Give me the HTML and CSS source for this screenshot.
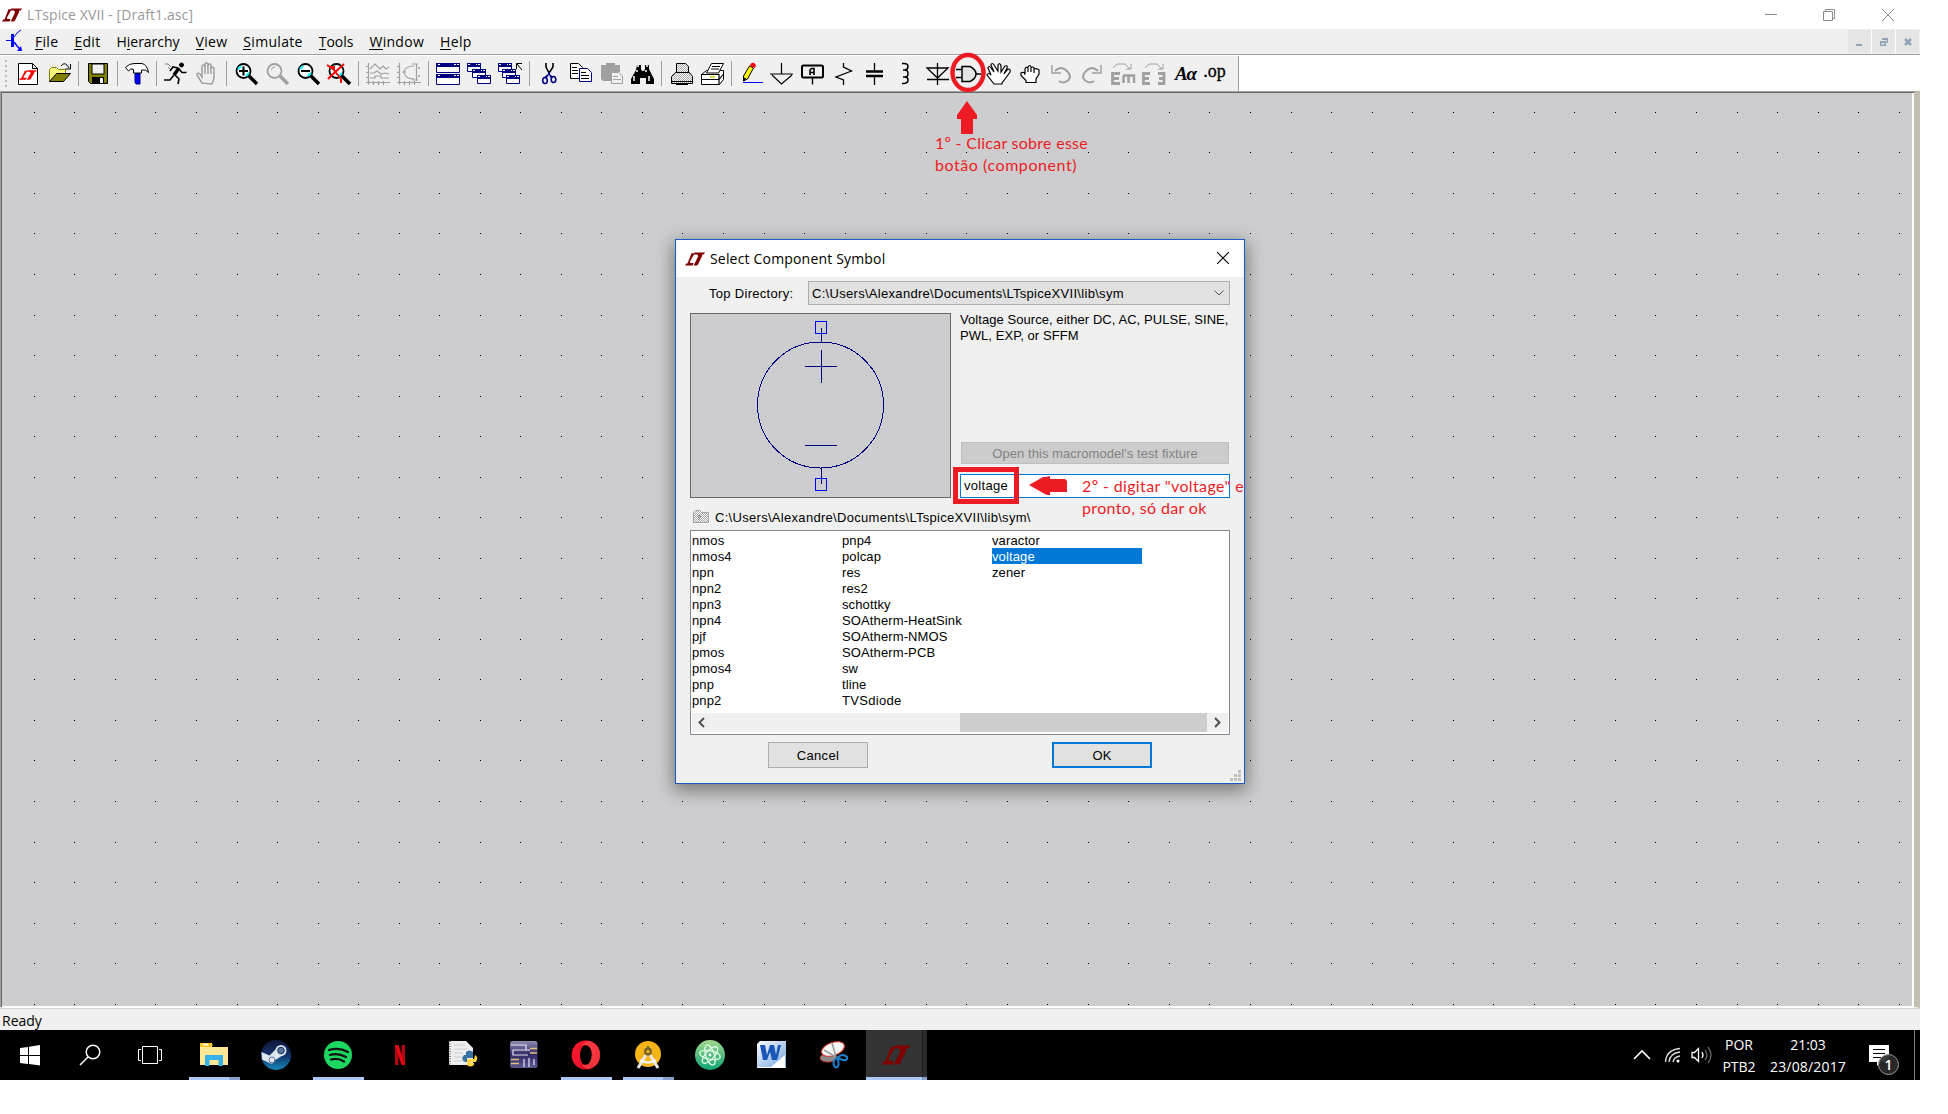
FILE: index.html
```html
<!DOCTYPE html>
<html lang="pt">
<head>
<meta charset="utf-8">
<title>LTspice XVII - [Draft1.asc]</title>
<link rel="stylesheet" href="styles.css">
</head>
<body>
<svg class="defs" aria-hidden="true">
  <symbol id="lt" viewBox="0 0 20 14"><path d="M6.5 1.2h3.2L5 9.4q-.6 1.4.8 1.6h2.8l-1 2.6H0l1.3-2h1.2z"/><path d="M9.3.4H20l-1.3 2.1h-1.9q.7.5.2 1.8l-4 8.3q-.5 1-1.6 1H8.6l4-8.2q1-2-.6-2.9h-3z"/></symbol>
  <symbol id="mag" viewBox="0 0 31 24"><circle cx="12.500" cy="9" r="7" fill="#f7ffff" stroke="#000" stroke-width="1.800"/><path d="M7 7l3-3M18 11l-3 3" stroke="#0ff" stroke-width="2"/><path d="M18 14l8 8" stroke="#000" stroke-width="3.500"/></symbol>
  <symbol id="win" viewBox="0 0 15 10"><path d="M.5.500h13v8H.5z" fill="#fff" stroke="#000080"/><path d="M0 0h14v4H0z" fill="#000080"/><path d="M1 1.500h2M9 1.500h1M11 1.500h2" stroke="#fff"/></symbol>
  <pattern id="hatch" width="2" height="2" patternUnits="userSpaceOnUse"><rect width="2" height="2" fill="#fff"/><path d="M0 0h1v1h-1zM1 1h1v1h-1z" fill="#a8a8a8"/></pattern>
  <pattern id="yhatch" width="2" height="2" patternUnits="userSpaceOnUse"><rect width="2" height="2" fill="#ff0"/><path d="M0 0h1v1h-1zM1 1h1v1h-1z" fill="#fff"/></pattern>
  <linearGradient id="steam" x2="0" y2="1"><stop offset="0" stop-color="#10193b"/><stop offset=".5" stop-color="#113066"/><stop offset="1" stop-color="#1689bd"/></linearGradient>
  <linearGradient id="atom" x2="0" y2="1"><stop offset="0" stop-color="#a3d78c"/><stop offset="1" stop-color="#0da574"/></linearGradient>
  <linearGradient id="opera" x2="1" y2="1"><stop offset="0" stop-color="#ff1b2d"/><stop offset=".5" stop-color="#f0142c"/><stop offset="1" stop-color="#b5000f"/></linearGradient>
  <linearGradient id="chip" x2="0" y2="1"><stop offset="0" stop-color="#8f8cb4"/><stop offset=".5" stop-color="#2f2b66"/><stop offset="1" stop-color="#5e5a92"/></linearGradient>
  <linearGradient id="word" x2="1" y2="1"><stop offset="0" stop-color="#fff"/><stop offset="1" stop-color="#6fa3de"/></linearGradient>
</svg>

<div class="screen">
  <header class="titlebar">
    <svg class="logo" width="20" height="14"><use href="#lt"/></svg>
    <span class="title ui">LTspice XVII - [Draft1.asc]</span>
    <svg class="winbtns" width="130" height="14" fill="none" stroke="#8c8c8c">
      <path d="M0 6.500h12M58.500 3.500h9v9h-9zM60.500 3.500v-2h9v9h-2M117 1l12 12M129 1l-12 12"/>
    </svg>
  </header>

  <nav class="menubar">
    <svg class="bjt" width="18" height="24" fill="none" stroke="#00f"><path d="M0 11.500h6"/><path d="M6.500 5v13" stroke-width="3"/><path d="M8 8l3-4 4-3" stroke-width="1"/><path d="M8 13l3 4 4 4" stroke-width="1.500"/><path d="M16 22h-5l4-5z" fill="#00f" stroke="none"/></svg>
    <span class="ui"><u>F</u>ile</span><span class="ui"><u>E</u>dit</span><span class="ui tight">H<u>i</u>erarchy</span><span class="ui"><u>V</u>iew</span><span class="ui"><u>S</u>imulate</span><span class="ui tight"><u>T</u>ools</span><span class="ui"><u>W</u>indow</span><span class="ui"><u>H</u>elp</span>
    <div class="mdi">
      <i><svg width="23" height="23"><path d="M8 14h6v2H8z"/></svg></i>
      <i><svg width="23" height="23"><path d="M8 11h6v5H8zM9.500 13v1.500h3V13zM10 8h6v5h-1.500V10H10z" fill-rule="evenodd"/></svg></i>
      <i><svg width="23" height="23"><path d="M9 9l6 6M15 9l-6 6" stroke="#91a3b4" stroke-width="2.500"/></svg></i>
    </div>
  </nav>

  <div class="toolrow">
  <div class="toolbar">
    <i class="grip"></i>
    <svg><path d="M5.500 1.500h14l5 5v16h-19z" fill="#fff" stroke="#000"/><path d="M19.500 1.500v5h5" fill="none" stroke="#000"/><svg x="6" y="8" width="18" height="10" viewBox="0 0 20 14" preserveAspectRatio="none" fill="red"><use href="#lt" width="20" height="14"/></svg></svg>
    <svg><path d="M5.500 19V7.500l2-2h5l2 2h7v4" fill="url(#yhatch)" stroke="#808000"/><path d="M5.500 19.500l7-8h14l-7 8z" fill="#808000" stroke="#000"/><path d="M17 4q3-4 6-1l2 3M26.500 2v5h-5" fill="none" stroke="#000"/></svg>
    <i class="sep"></i>
    <svg><path d="M5.500 1.500h19v20h-17l-2-2z" fill="#808000" stroke="#000"/><path d="M9 2h12v10H9z" fill="#f0f0f0" stroke="#000"/><path d="M9 15h12v6.500H9z"/><path d="M17 16h3v5h-3z" fill="#f0f0f0"/></svg>
    <i class="sep"></i>
    <svg><path d="M13 11h5v11h-4l-1-2z" fill="#00f" stroke="#000080"/><path d="M3.500 5.500Q7 1.500 12 1.500h8q5 1 6.500 9-3-3.500-6-2.500h-1v3h-8V7.500q-3-2-5 1.500z" fill="#fff" stroke="#000"/></svg>
    <i class="sep"></i>
    <svg fill="none" stroke="#000"><circle cx="20.500" cy="3" r="2" fill="#000"/><path d="M18 6l-5 7" stroke-width="3.500"/><path d="M18 7l3 3.500h4.500M17 6l-5-1-3 4M14 13l4 4-1 5M13 13l-4 5H3" stroke-width="1.600"/><path d="M4 2h3l3 3M7 5l2 2" stroke="#808080"/></svg>
    <svg fill="#f0f0f0" stroke="#a0a0a0" stroke-width="1.500"><path d="M10 21l-5-8q0-3 3-1l2 3V4q1.500-2 3 0V2q1.500-2 3 0v1q1.500-2 3 0v3q2-1.500 3 0v10l-2 6z"/><path d="M13 4v8M16 3v9M19 5v7" fill="none"/></svg>
    <i class="sep"></i>
    <svg><use href="#mag"/><path d="M8 9h9M12.500 4.500v9" stroke="#000" stroke-width="2"/></svg>
    <svg><g fill="none" stroke="#a0a0a0"><circle cx="12.500" cy="9" r="7" stroke-width="1.800"/><path d="M9 8q1-3 4-3"/><path d="M18 14l8 8" stroke-width="3.500"/></g></svg>
    <svg><use href="#mag"/><path d="M8 9h9" stroke="#000" stroke-width="2"/></svg>
    <svg><use href="#mag"/><path d="M3 3l6 4 8 10M20 2L8 13l-4 4M6 5h4v3M17 17v4" fill="none" stroke="red" stroke-width="2"/></svg>
    <i class="sep"></i>
    <svg fill="none" stroke="#a0a0a0" stroke-width="1.200"><path d="M5.500 1v21.500M3 20.500h24M3 4.500h3M3 10.500h3M3 15.500h3M10.500 19v4M15.500 19v4M20.500 19v4M7 7l5-5 5 5 3-3 3 3 3-2M7 11h4l3-2 4 3 4-1 4 1M7 16h5v-2h6v2h8"/></svg>
    <svg fill="none" stroke="#a0a0a0" stroke-width="1.200"><path d="M5.500 1v21.500M3 20.500h24M3 4.500h3M3 10.500h3M3 15.500h3M10.500 19v4M15.500 19v4M20.500 19v4M22.500 2v17M18 2h6M18 18h6M20 4q-9 0-10 6 1 7 10 7"/><path d="M8 10h4M24 5l2 2M24 15l2-2"/></svg>
    <i class="sep"></i>
    <svg><g fill="#fff" stroke="#000080"><path d="M3.500 1.500h23v9h-23zM3.500 12.500h23v10h-23z"/></g><path d="M3 1h24v4H3zM3 12h24v4H3z" fill="#000080"/><path d="M5 2.500h2M21 2.500h2M24 2.500h2M5 13.500h2M21 13.500h2M24 13.500h2" stroke="#fff"/></svg>
    <svg><use href="#win" x="3" y="1" width="15" height="10"/><use href="#win" x="8" y="7" width="15" height="10"/><use href="#win" x="13" y="13" width="15" height="10"/></svg>
    <svg><use href="#win" x="3" y="1" width="15" height="10"/><use href="#win" x="7" y="7" width="15" height="10"/><use href="#win" x="11" y="13" width="15" height="10"/><path d="M27 8l-5-6M21.500 7V1.500H27" fill="none" stroke="#000"/></svg>
    <i class="sep"></i>
    <svg fill="none"><path d="M12 1v4l3 6M19 1v4l-4 6" stroke="#000" stroke-width="1.600"/><path d="M15 10v3M14 13l-3 3M16 13l2 3" stroke="#000080" stroke-width="2"/><ellipse cx="11" cy="18.500" rx="2.300" ry="3" stroke="#000080" stroke-width="1.600"/><ellipse cx="19.500" cy="17.500" rx="2.300" ry="3" stroke="#000080" stroke-width="1.600"/></svg>
    <svg fill="#fff"><path d="M5.500 1.500h8l4 4v11h-12z" stroke="#000"/><path d="M7 5.500h5M7 8.500h6M7 11.500h6" stroke="#000"/><path d="M14.500 6.500h8l4 4v9h-12z" stroke="#000080"/><path d="M16 10.500h5M16 13.500h8M16 16.500h8" stroke="#000"/></svg>
    <svg><path d="M5 3h5V1h9v2h5v7h-9v9H7l-2-2z" fill="#a0a0a0"/><path d="M15.500 10.500h7l4 3v8h-11z" fill="#f0f0f0" stroke="#a0a0a0"/><path d="M17 14.500h5M17 17.500h8M10 5h9" stroke="#a0a0a0"/></svg>
    <svg><path d="M10 3h4v4l1 2h2l1-2V3h4v4l5 10v5h-8v-6h-6v6H4v-5L9 8z"/><path d="M10 4h2M19 4h2M10 8v2M19 8v2M7 14v5M22 14v5" stroke="#fff" stroke-width="1.500"/></svg>
    <i class="sep"></i>
    <svg fill="url(#hatch)" stroke="#000"><path d="M10.500 10.500v-9h9l3 3v6z"/><path d="M9.500 10.500h14l3 4v7h-21v-7z"/><path d="M6 19.500h20M10 22.500h12" fill="none"/></svg>
    <svg fill="#fff" stroke="#000"><path d="M4.500 12.500l5-4h17v9l-4 5h-18z"/><path d="M9.500 11l5-9.500h12l-5 9.500z"/><path d="M15 4.500h8M14 7h8M4 12.500h18v10M4 17.500h18l4-5" fill="none" stroke-width="1.200"/><path d="M13 15h5" stroke="#cc0" stroke-width="1.500"/></svg>
    <i class="sep"></i>
    <svg><path d="M7.500 14l6-10 4 2-6 11-4 2z" fill="#ff0" stroke="#000"/><path d="M14 4q1-4 4-3t1 5z" fill="red"/><path d="M7 15v4l4-2z"/><path d="M7 20.500h20" stroke="#00f"/></svg>
    <svg fill="none" stroke="#000" stroke-width="1.200"><path d="M14.500 1v11M3 12h23M5 13l9.500 9L25 13"/></svg>
    <svg fill="#f0f0f0" stroke="#000"><rect x="4" y="3.500" width="21" height="12" rx="1.500" stroke-width="2"/><path d="M14.500 16v6.500" stroke-width="1.400"/><path d="M12 13V8l1.500-1.500h2.500V13M12 10.500h4" stroke-width="1.600"/></svg>
    <svg fill="none" stroke="#000" stroke-width="1.300"><path d="M14.500 1v4l8 4L7 15l7.500 3v5"/></svg>
    <svg fill="none" stroke="#000"><path d="M14.500 1v8M14.500 15v8" stroke-width="1.300"/><path d="M6 9.500h17M6 14h17" stroke-width="2.300"/></svg>
    <svg fill="none" stroke="#000" stroke-width="1.500"><path d="M11 1.500h2q4 0 4 3t-3 3.500h-2 2q3 0 3 3.500T14 15h-2 2q3 0 3 3t-4 3.500h-2"/></svg>
    <svg fill="none" stroke="#000" stroke-width="1.300"><path d="M15.500 1v22M5 6h21L15.500 16zM5 17.500h22"/></svg>
    <svg fill="#e4e4e4" stroke="#000" stroke-width="1.500"><path d="M9 4.500h8q6 3 6 7.500t-6 7.500H9zM3 7.500h6M3 15.500h6M23 12h5"/></svg>
    <svg fill="#fff" stroke="#000" stroke-width="1.200"><path d="M10 22l-7-9q1-3 4 0L4 6q1-3 3 0l3 4-3-7q1-3 3 0l4 6V3q2-3 3 1v6l4-6q3-1 2 2l-3 6 4-5q3 0 2 3l-5 7-3 4v1z"/></svg>
    <svg fill="#fff" stroke="#000" stroke-width="1.200"><path d="M11 20.500v-2l-5-5q-1-4 3-3l1 2V7q1-3 3-1V5q2-3 3 0v1q2-2 3 0v1q3-1 5 1v4l-3 5v3.500zM13 6v4M16 6v4M19 7v4"/></svg>
    <svg fill="none" stroke="#a0a0a0" stroke-width="2"><path d="M9 9q6-6 12 0t0 10q-4 3-8 0"/><path d="M6 3v8h9" stroke-width="1.500"/></svg>
    <svg fill="none" stroke="#a0a0a0" stroke-width="2"><path d="M21 9q-6-6-12 0t0 10q4 3 8 0"/><path d="M24 3v8h-9" stroke-width="1.500"/></svg>
    <svg fill="none" stroke="#a0a0a0"><path d="M12 11.500H4.500v10H12M4.500 16.500H11" stroke-width="2.800"/><path d="M15 13.500h11V21M20.500 14v7M15.500 14v7" stroke-width="2.500"/><path d="M5 6l4-4h8l5 5M23 2v5h-5"/></svg>
    <svg fill="none" stroke="#a0a0a0"><path d="M11 11.500H4.500v10H11M4.500 16.500H10M19 11.500h6v10h-6M20 16.500h5" stroke-width="2.800"/><path d="M6 6l4-4h8l5 5M24 2v5h-5"/></svg>
    <span class="tool aa">Aα</span>
    <span class="tool op">.op</span>
  </div>
  </div>

  <main class="sheet"><svg width="1910" height="914"><path id="dots" stroke="#000" shape-rendering="crispEdges"/></svg></main>

  <footer class="status"><span class="ui tight">Ready</span></footer>

  <div class="taskbar">
    <div class="sys"><svg viewBox="0 0 60 50" fill="#fff"><path d="M20 18l8-1v8h-8zM29 16.800l11-1.800v10H29zM20 26h8v8l-8-1zM29 26h11v9.500l-11-1.500z"/></svg></div>
    <div class="sys"><svg viewBox="0 0 60 50" fill="none" stroke="#fff" stroke-width="1.500"><circle cx="33" cy="22" r="6.800"/><path d="M28 27l-8 8"/></svg></div>
    <div class="sys last"><svg viewBox="0 0 60 50" fill="none" stroke="#fff"><path d="M22.500 16.500h15v17h-15zM21 19.500h-2.500v11H21M39 19.500h2.500v11H39"/></svg></div>
    <div class="app run multi"><svg viewBox="0 0 62 50"><path d="M17 13h12v4h16v18H17z" fill="#f5cf4b"/><path d="M17 17h28v18H17z" fill="#ffe793"/><path d="M17 13h11l2 2-2 2H17z" fill="#fbc52c"/><path d="M20 14.500h5" stroke="#fff" stroke-width="1.500"/><path d="M22 36V25h18v11h-4.500v-6h-9v6z" fill="#35b0e8"/></svg></div>
    <div class="app"><svg viewBox="0 0 62 50"><circle cx="31" cy="25" r="15" fill="url(#steam)"/><path d="M16.500 22l8 3.500 7-7 6 7-8 5q-2 5-6 2l-6.500-3z" fill="#dfe5ee"/><circle cx="36" cy="20.500" r="5.500" fill="#dfe5ee"/><circle cx="36" cy="20.500" r="3.300" fill="#5c7398" stroke="#18315e"/><circle cx="27" cy="30" r="3" fill="none" stroke="#5c7398"/></svg></div>
    <div class="app run"><svg viewBox="0 0 62 50"><circle cx="31" cy="25" r="14" fill="#1ed760"/><path d="M22 20q10-3 19 2M23 25q8-2.500 16 2M24 29.500q7-2 13 2" fill="none" stroke="#111" stroke-width="2.300" stroke-linecap="round"/></svg></div>
    <div class="app"><svg viewBox="0 0 62 50"><path d="M26 15h3.500v20H26zM32.500 15H36v20h-3.500z" fill="#b20710"/><path d="M26 15h3.500L36 35h-3.500z" fill="#e50914"/></svg></div>
    <div class="app"><svg viewBox="0 0 62 50"><path d="M18 11h17l7 7v17H18z" fill="#eceef0"/><path d="M19 11v24" stroke="#888" stroke-dasharray="1 1.500" stroke-width="2"/><path d="M23 15h11M23 19h13M23 23h9M23 27h8M23 31h10" stroke="#ccc"/><path d="M35 26v-4q3-3 7 0v6h-6v4h-2q-5-3-1-7h5z" fill="#3772a4"/><path d="M44 25q4 2 1 7h-5v1h3v2q-4 3-7 0v-6h7z" fill="#ffd343"/></svg></div>
    <div class="app"><svg viewBox="0 0 62 50"><rect x="17" y="11" width="27.500" height="27" rx="2.500" fill="url(#chip)"/><path d="M18 15h15v5h4M35 25H20v-5h14M31 37v-8M36 37v-9M41 35v-6" fill="none" stroke="#e8e6f4" stroke-width="1.200"/><path d="M37 18.500h7M37 23h7M18 29.500h8M18 33.500h8" stroke="#e8bd7a" stroke-width="1.300"/></svg></div>
    <div class="app run"><svg viewBox="0 0 62 50"><path d="M31 10.500c19 0 19 29 0 29s-19-29 0-29zm0 4.500c-8 0-8 20 0 20s8-20 0-20z" fill="url(#opera)" fill-rule="evenodd"/><path d="M34 11q11 3 11 14T34 39q-4 0-7-4 9 1 9.500-10T27 15q3-4 7-4z" fill="#ff4b4b" opacity=".65"/></svg></div>
    <div class="app run multi"><svg viewBox="0 0 62 50"><circle cx="31" cy="24" r="13" fill="#f6b416"/><path d="M29 25l-8 13M33 25l8 13" stroke="#e9e9e9" stroke-width="3"/><path d="M23 30q8 5 16 0" fill="none" stroke="#f4f4f4" stroke-width="2.500"/><circle cx="31" cy="21.500" r="2.800" fill="#f6b416" stroke="#6e6130" stroke-width="2.200"/><path d="M31 16v3" stroke="#6e6130" stroke-width="2"/></svg></div>
    <div class="app"><svg viewBox="0 0 62 50"><circle cx="31" cy="25" r="15" fill="url(#atom)"/><g fill="none" stroke="#e9fff0" stroke-width="1.200"><ellipse cx="31" cy="25" rx="10.500" ry="4.300" transform="rotate(12 31 25)"/><ellipse cx="31" cy="25" rx="10.500" ry="4.300" transform="rotate(72 31 25)"/><ellipse cx="31" cy="25" rx="10.500" ry="4.300" transform="rotate(132 31 25)"/></g><circle cx="31" cy="25" r="1.400" fill="#fff"/></svg></div>
    <div class="app"><svg viewBox="0 0 62 50"><path d="M16 14l3-3h26v27H16z" fill="url(#word)"/><path d="M30 37l14-12v12z" fill="#fff"/><path d="M19 15h5l2 10 3-10h4l2 10 2-10h3l-4 15h-5l-2-8-3 8h-4z" fill="#1a56b5"/><path d="M16.500 37.500h28" stroke="#fff"/></svg></div>
    <div class="app"><svg viewBox="0 0 62 50"><ellipse cx="25" cy="28" rx="8" ry="4" fill="#8a8a8a" stroke="#c33"/><ellipse cx="30" cy="19" rx="12" ry="6.500" transform="rotate(-20 30 19)" fill="#f6f6f6" stroke="#d8342a"/><path d="M29 13l4 14M21 20l12 7" stroke="#9a9a9a" stroke-width="1.500"/><path d="M34 28q-6 4-2 9 5 2 3-8zM35 27q5-4 9 0 1 6-9 1z" fill="none" stroke="#1a82cf" stroke-width="2"/></svg></div>
    <div class="app active"><svg class="tlogo" width="30" height="20" fill="#800000"><use href="#lt"/></svg></div>
    <div class="tray">
      <svg class="chev" width="18" height="50" fill="none" stroke="#fff" stroke-width="1.600"><path d="M1 29l8-8 8 8"/></svg>
      <svg class="wifi" width="18" height="50" fill="none" stroke="#ddd" stroke-width="1.300"><path d="M1.500 32Q2 20 16 18.500M5 32q1-9 11-10M9 32q1-5 7-6"/><circle cx="14" cy="31" r="1.500" fill="#fff" stroke="none"/></svg>
      <svg class="vol" width="22" height="50" fill="none" stroke="#fff" stroke-width="1.300"><path d="M1 22.500h2.500l4-4v13l-4-4H1z"/><path d="M11 22q2 3 0 6"/><path d="M14 20q4 5 0 10M17 17q6 8 0 16" stroke="#666"/></svg>
      <div class="lang"><span class="ui">POR</span><span class="ui">PTB2</span></div>
      <div class="clock"><span class="ui">21:03</span><span class="ui date">23/08/2017</span></div>
      <div class="notif"><svg width="20" height="22"><path d="M0 0h20v17h-8l-4 4v-4H0z" fill="#fff"/><path d="M4 4.500h12M4 8.500h12M4 12.500h8" stroke="#000"/></svg><b class="ui">1</b></div>
      <i class="peek"></i>
    </div>
  </div>

  <section class="dialog">
    <div class="dtitle"><svg class="logo" width="20" height="14"><use href="#lt"/></svg><span class="ui">Select Component Symbol</span><svg class="close" width="12" height="12" stroke="#000" stroke-width="1.100"><path d="M0 0l12 12M12 0L0 12"/></svg></div>
    <div class="dbody">
      <div class="dirrow"><label class="wide">Top Directory:</label><div class="combo"><span class="wide">C:\Users\Alexandre\Documents\LTspiceXVII\lib\sym</span><svg width="10" height="6" fill="none" stroke="#555"><path d="M.5.500L5 5 9.500.500"/></svg></div></div>
      <div class="mid">
        <svg class="preview" width="261" height="185" fill="none" stroke="#000080" shape-rendering="crispEdges"><ellipse cx="130.500" cy="92" rx="63" ry="63"/><path d="M131.500 15v14M131.500 37v33M115 53.500h32M115 132.500h32M131.500 155v16"/><path d="M125.500 8.500h11v12h-11zM125.500 165.500h11v12h-11z" stroke="#00f"/></svg>
        <div class="info">
          <p>Voltage Source, either DC, AC, PULSE, SINE,<br>PWL, EXP, or SFFM</p>
          <div class="fixture">Open this macromodel's test fixture</div>
          <div class="edit wide">voltage</div>
        </div>
      </div>
      <div class="path"><svg width="17" height="14"><path d="M.5 2.500l2-2h4l2 2h7v10H.5z" fill="url(#hatch)" stroke="#a0a0a0"/><path d="M6 5v5M4 7l2-2 2 2" stroke="#888" fill="none"/><path d="M16.500 3v10.500H1" fill="none" stroke="#fff"/></svg><span class="wide">C:\Users\Alexandre\Documents\LTspiceXVII\lib\sym\</span></div>
      <div class="list">
        <div class="cols">
          <ul><li>nmos</li><li>nmos4</li><li>npn</li><li>npn2</li><li>npn3</li><li>npn4</li><li>pjf</li><li>pmos</li><li>pmos4</li><li>pnp</li><li>pnp2</li></ul>
          <ul><li>pnp4</li><li>polcap</li><li>res</li><li>res2</li><li>schottky</li><li>SOAtherm-HeatSink</li><li>SOAtherm-NMOS</li><li>SOAtherm-PCB</li><li>sw</li><li>tline</li><li class="wide">TVSdiode</li></ul>
          <ul><li>varactor</li><li class="sel">voltage</li><li>zener</li></ul>
        </div>
        <div class="scroll"><svg width="19" height="19" fill="none" stroke="#505050" stroke-width="2"><path d="M12 5L7.500 9.500l4.500 4.500"/></svg><i></i><svg width="21" height="19" fill="none" stroke="#505050" stroke-width="2"><path d="M8 5l4.500 4.500L8 14"/></svg></div>
      </div>
      <div class="buttons"><button class="btn">Cancel</button><button class="btn ok">OK</button></div>
    </div>
    <svg class="resize" width="11" height="11" fill="#bfbfbf"><path d="M8 0h3v3H8zM8 4h3v3H8zM8 8h3v3H8zM4 4h3v3H4zM4 8h3v3H4zM0 8h3v3H0z"/></svg>
  </section>

  <svg class="marks" width="330" height="460" viewBox="940 50 330 460" fill="#ed1c24">
    <ellipse cx="968" cy="72.500" rx="15.500" ry="17.500" fill="none" stroke="#ed1c24" stroke-width="4.500"/>
    <path d="M967 101l10 14v4h-4v15h-12v-15h-4v-4z"/>
    <rect x="955.500" y="469.500" width="61" height="32" fill="none" stroke="#ed1c24" stroke-width="5"/>
    <path d="M1029 485l14-8h3l4-1v3h15l2 2v11h-17v3h-3l-4-2z"/>
  </svg>
  <p class="note one">1º - Clicar sobre esse<br><span class="loose">botão (component)</span></p>
  <p class="note two">2º - digitar "voltage" e<br>pronto, só dar ok</p>
</div>
<script src="sheet.js"></script>
</body>
</html>
```
FILE: styles.css
```css
* { box-sizing: border-box; }
body { margin: 0; background: #fff; font-family: "Liberation Sans", sans-serif; }
p, ul { margin: 0; padding: 0; list-style: none; }
svg { display: block; flex: none; }
i { display: block; flex: none; }
.defs { position: absolute; width: 0; height: 0; }
.ui { font-family: "Open Sans", sans-serif; font-size: 14px; white-space: nowrap; }
.screen { position: relative; width: 1920px; height: 1080px; display: flex; flex-direction: column; overflow: hidden; }

.titlebar { height: 29px; display: flex; align-items: center; padding-left: 2px; background: #fff; }
.logo { fill: #800000; }
.title { margin-left: 5px; color: #999; letter-spacing: .1px; }
.winbtns { margin: 0 25px 0 auto; }

.menubar { height: 26px; display: flex; background: #f0f0f0; border-bottom: 1px solid #a0a0a0; padding-left: 6px; gap: 16px; line-height: 25px; }
.menubar .ui { letter-spacing: .3px; }
.menubar .tight { letter-spacing: -.02px; }
.bjt { margin-right: -5px; }
.menubar u { text-decoration: none; box-shadow: inset 0 -1px #000; display: inline-block; line-height: 16px; }
.mdi { display: flex; gap: 1px; margin: 1px 1px 1px auto; background: #fff; }
.mdi i { width: 23px; background: #e5e5e5; }
.mdi svg { fill: #91a3b4; }

.toolrow { height: 36px; padding-top: 1px; background: #fff; }
.toolbar { width: 1239px; height: 35px; display: flex; align-items: center; padding-left: 5px; background: #f0f0f0; border-right: 1px solid #a0a0a0; }
.toolbar > svg { width: 31px; height: 24px; }
.grip { width: 2px; height: 27px; margin-right: 6px; background: repeating-linear-gradient(#bbb 0 2px, transparent 2px 5px); }
.sep { width: 1px; height: 25px; margin: 0 4px 0 3px; background: #a0a0a0; }
.tool { width: 31px; text-align: center; white-space: nowrap; font-family: "Liberation Serif", serif; }
.aa { font-size: 19px; font-style: italic; font-weight: bold; letter-spacing: -1px; }
.op { font-size: 18px; margin: -4px 0 0 -2px; -webkit-text-stroke: .3px #000; }

.sheet { height: 917px; width: 1920px; background: #cdcdcf; border-top: 1px solid #a0a0a0; border-left: 1px solid #a0a0a0; border-right: 6px solid #c3bfb1; border-bottom: 1px solid #fff; box-shadow: inset 1px 1px #696969, inset -2px -1px #fff; }
.status { height: 22px; background: #f0f0f0; border-top: 1px solid #d4d4d4; padding-left: 2px; line-height: 23px; }

.taskbar { height: 50px; background: #000; display: flex; }
.sys { width: 60px; }
.sys.last { margin-right: 3px; }
.app { width: 62px; position: relative; }
.app.run::after, .app.active::after { content: ""; position: absolute; left: 6px; bottom: 0; width: 51px; height: 3px; background: #adc8f8; }
.app.multi::after { background: linear-gradient(90deg, #adc8f8 40px, #8ba1cc 40px); }
.app.active { width: 61px; margin-left: 1px; background: linear-gradient(90deg, #333 56px, #1c1c1c 56px 57px, #2b2b2b 57px); }
.app.active::after { left: 0; width: 61px; background: linear-gradient(90deg, #adc8f8 56px, #7488b0 56px 57px, #8ba1cc 57px); }
.tlogo { margin: 15px 0 0 15px; }
.tray { margin-left: auto; display: flex; color: #fff; }
.wifi { margin-left: 13px; }
.vol { margin-left: 9px; }
.lang, .clock { display: flex; flex-direction: column; align-items: center; line-height: 22px; padding-top: 4px; }
.lang { width: 36px; margin-left: 8px; }
.clock { width: 78px; margin-left: 12px; }
.date { letter-spacing: .17px; }
.notif { position: relative; margin: 15px 0 0 22px; width: 45px; }
.notif b { position: absolute; left: 9px; top: 9px; width: 21px; height: 21px; border: 1px solid #999; border-radius: 50%; background: #2b2b2bee; line-height: 19px; text-align: center; font-weight: 600; }
.peek { width: 6px; border-left: 1px solid #777; }

.dialog { position: absolute; left: 675px; top: 239px; width: 570px; height: 545px; border: 1px solid #1f5ac4; background: #f0f0f0; box-shadow: 0 5px 16px 2px rgba(0,0,0,.4); display: flex; flex-direction: column; font-size: 13px; letter-spacing: .06px; }
.dtitle { height: 37px; background: #fff; display: flex; align-items: center; padding: 0 15px 0 9px; gap: 5px; letter-spacing: .18px; }
.dtitle .close { margin-left: auto; margin-top: -1px; }
.dbody { padding: 4px 14px 0; display: flex; flex-direction: column; }
.wide { letter-spacing: .3px; white-space: nowrap; }
.dirrow { display: flex; align-items: center; height: 24px; padding-left: 19px; }
.combo { margin-left: auto; width: 422px; height: 24px; border: 1px solid #adadad; background: #e1e1e1; display: flex; align-items: center; justify-content: space-between; padding: 0 5px 0 3px; }
.mid { display: flex; justify-content: space-between; margin-top: 8px; height: 185px; }
.preview { background: #cdcdcf; outline: 1px solid #696969; outline-offset: -1px; }
.info { width: 270px; display: flex; flex-direction: column; }
.info p { line-height: 16px; margin-top: -1px; white-space: nowrap; }
.fixture { margin: auto 1px 10px; height: 22px; border: 1px solid #bfbfbf; background: #ccc; color: #838383; line-height: 21px; text-align: center; }
.edit { height: 24px; border: 1px solid #0078d7; background: #fff; padding-left: 3px; line-height: 22px; }
.path { display: flex; align-items: center; height: 32px; padding: 6px 0 0 3px; gap: 5px; }
.list { height: 205px; border: 1px solid #828790; background: #fff; padding: 1px 1px 0; display: flex; flex-direction: column; justify-content: space-between; }
.cols { display: flex; }
.cols ul { width: 150px; }
.cols li { height: 16px; line-height: 17px; white-space: nowrap; letter-spacing: .12px; }
.cols .wide { letter-spacing: .3px; }
.sel { background: #0078d7; color: #fff; }
.scroll { height: 21px; display: flex; background: #f0f0f0; border-bottom: 2px solid #fff; }
.scroll i { width: 247px; margin-left: auto; background: #cdcdcd; }
.buttons { display: flex; margin-top: 7px; padding-left: 78px; gap: 184px; }
.btn { width: 100px; height: 26px; border: 1px solid #adadad; background: #e1e1e1; font: 13px "Liberation Sans", sans-serif; padding: 0; letter-spacing: .3px; }
.btn.ok { border: 2px solid #0078d7; letter-spacing: 0; }
.resize { position: absolute; right: 3px; bottom: 2px; }

.marks { position: absolute; left: 940px; top: 50px; }
.note { position: absolute; font: 16px/22px Lato, sans-serif; color: #ed1c24; white-space: nowrap; letter-spacing: .36px; }
.loose { letter-spacing: .56px; }
.one { left: 935px; top: 132px; letter-spacing: .27px; }
.two { left: 1082px; top: 475px; }
```
FILE: sheet.js
```js
// Grid points of the schematic sheet, snapped to whole pixels
const step = 40.54;
let d = "";
for (let r = 0; r < 23; r++) {
  for (let c = 0; c < 47; c++) {
    const x = Math.floor(33.33 + c * step);
    const y = Math.floor(20.33 + r * step);
    d += `M${x} ${y + 0.5}h1`;
  }
}
document.getElementById("dots").setAttribute("d", d);
```
